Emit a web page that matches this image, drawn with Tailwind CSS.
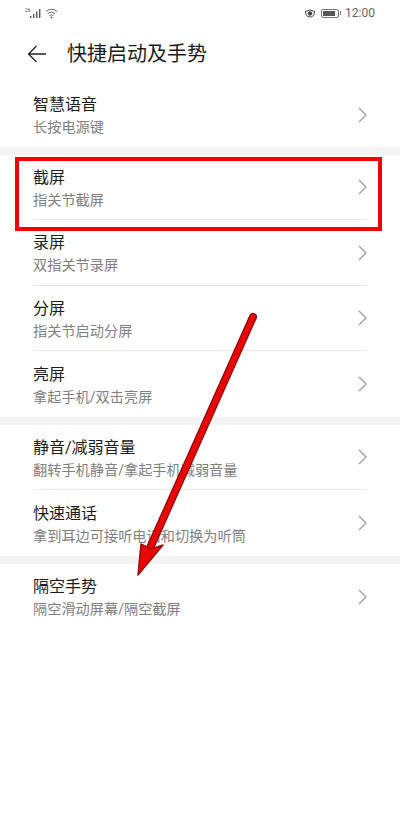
<!DOCTYPE html>
<html lang="zh-CN">
<head>
  <meta charset="UTF-8">
  <meta name="viewport" content="width=device-width, initial-scale=1.0">
  <title>快捷启动及手势</title>
  <script src="https://cdn.jsdelivr.net/npm/@tailwindcss/browser@4"></script>
</head>
<body class="relative w-[400px] h-[816px] overflow-hidden bg-white text-[#1c1c1c] font-['Roboto','Noto_Sans_CJK_SC',sans-serif]">

  <!-- status bar -->
  <div class="h-[26px] pl-[25px] pr-[25px] flex items-center justify-between text-[#666]">
    <div class="flex items-center gap-[3px]">
      <svg width="17" height="12" viewBox="0 0 17 12" fill="#555">
        <text x="0" y="4.5" font-size="5" font-family="Roboto">26</text>
        <rect x="5" y="9" width="1.4" height="2"/><rect x="8" y="7" width="1.4" height="4"/><rect x="11" y="4.500" width="1.4" height="6.500"/><rect x="14" y="2" width="1.400" height="9"/>
      </svg>
      <svg width="13" height="11" viewBox="0 0 13 11" fill="none" stroke="#666" stroke-width="1">
        <path d="M1 3.500Q6.500-1 12 3.500M2.800 5.500Q6.500 2.500 10.200 5.500M4.500 7.500Q6.500 6 8.500 7.500"/><circle cx="6.500" cy="9.500" r=".6" fill="#666"/>
      </svg>
    </div>
    <div class="flex items-center text-[12px]">
      <svg class="mr-[5px]" width="12" height="10" viewBox="0 0 12 10" fill="none" stroke="#444" stroke-width="1">
        <path d="M1 3.500Q6 .5 11 3.500M1.500 3Q1.500 9 6 9Q10.500 9 10.500 3"/><circle cx="6" cy="5.500" r="1.800" fill="#444"/>
      </svg>
      <div class="w-[18px] h-[9px] border border-[#777] rounded-[2px] p-px mr-px"><div class="w-[12px] h-full bg-[#555]"></div></div>
      <div class="w-px h-[4px] bg-[#777] mr-[4px]"></div>
      <span>12:00</span>
    </div>
  </div>

  <!-- title bar -->
  <div class="h-[56px] pl-[27px] flex items-center">
    <svg width="20" height="18" viewBox="0 0 20 18" fill="none" stroke="#222" stroke-width="1.300">
      <path d="M19 9H1.500M9.500 1L1.500 9l8 8"/>
    </svg>
    <span class="ml-[20px] text-[20px] leading-[28px]">快捷启动及手势</span>
  </div>

  <!-- group 1 -->
  <a class="h-[65px] pl-[33px] pr-[33px] flex items-center justify-between">
    <div class="pt-[2px]">
      <div class="text-[16px] leading-[22px]">智慧语音</div>
      <div class="text-[14.2px] leading-[22px] text-[#808080]">长按电源键</div>
    </div>
    <svg width="9" height="16" viewBox="0 0 9 16" fill="none" stroke="#999" stroke-width="1.200"><path d="M1 1l7 7-7 7"/></svg>
  </a>
  <div class="h-[8px] bg-[#f3f3f3]"></div>

  <!-- group 2 -->
  <div class="pl-[33px] pr-[33px]">
    <a class="h-[65px] flex items-center justify-between border-b border-[#e8e8e8]">
      <div class="pt-[4px]">
        <div class="text-[16px] leading-[22px]">截屏</div>
        <div class="text-[14.2px] leading-[22px] text-[#808080]">指关节截屏</div>
      </div>
      <svg width="9" height="16" viewBox="0 0 9 16" fill="none" stroke="#999" stroke-width="1.200"><path d="M1 1l7 7-7 7"/></svg>
    </a>
    <a class="h-[66px] flex items-center justify-between border-b border-[#e8e8e8]">
      <div class="pt-[3px]">
        <div class="text-[16px] leading-[22px]">录屏</div>
        <div class="text-[14.2px] leading-[22px] text-[#808080]">双指关节录屏</div>
      </div>
      <svg width="9" height="16" viewBox="0 0 9 16" fill="none" stroke="#999" stroke-width="1.200"><path d="M1 1l7 7-7 7"/></svg>
    </a>
    <a class="h-[65px] flex items-center justify-between border-b border-[#e8e8e8]">
      <div class="pt-[4px]">
        <div class="text-[16px] leading-[22px]">分屏</div>
        <div class="text-[14.2px] leading-[22px] text-[#808080]">指关节启动分屏</div>
      </div>
      <svg width="9" height="16" viewBox="0 0 9 16" fill="none" stroke="#999" stroke-width="1.200"><path d="M1 1l7 7-7 7"/></svg>
    </a>
    <a class="h-[66px] flex items-center justify-between">
      <div class="pt-[3px]">
        <div class="text-[16px] leading-[22px]">亮屏</div>
        <div class="text-[14.2px] leading-[22px] text-[#808080]">拿起手机/双击亮屏</div>
      </div>
      <svg width="9" height="16" viewBox="0 0 9 16" fill="none" stroke="#999" stroke-width="1.200"><path d="M1 1l7 7-7 7"/></svg>
    </a>
  </div>
  <div class="h-[8px] bg-[#f3f3f3]"></div>

  <!-- group 3 -->
  <div class="pl-[33px] pr-[33px]">
    <a class="h-[65px] flex items-center justify-between border-b border-[#e8e8e8]">
      <div class="pt-[4px]">
        <div class="text-[16px] leading-[22px]">静音/减弱音量</div>
        <div class="text-[14.2px] leading-[22px] text-[#808080]">翻转手机静音/拿起手机减弱音量</div>
      </div>
      <svg width="9" height="16" viewBox="0 0 9 16" fill="none" stroke="#999" stroke-width="1.200"><path d="M1 1l7 7-7 7"/></svg>
    </a>
    <a class="h-[66px] flex items-center justify-between">
      <div class="pt-[3px]">
        <div class="text-[16px] leading-[22px]">快速通话</div>
        <div class="text-[14.2px] leading-[22px] text-[#808080]">拿到耳边可接听电话和切换为听筒</div>
      </div>
      <svg width="9" height="16" viewBox="0 0 9 16" fill="none" stroke="#999" stroke-width="1.200"><path d="M1 1l7 7-7 7"/></svg>
    </a>
  </div>
  <div class="h-[8px] bg-[#f3f3f3]"></div>

  <!-- group 4 -->
  <a class="h-[65px] pl-[33px] pr-[33px] flex items-center justify-between">
    <div class="pt-[3px]">
      <div class="text-[16px] leading-[22px]">隔空手势</div>
      <div class="text-[14.2px] leading-[22px] text-[#808080]">隔空滑动屏幕/隔空截屏</div>
    </div>
    <svg width="9" height="16" viewBox="0 0 9 16" fill="none" stroke="#999" stroke-width="1.200"><path d="M1 1l7 7-7 7"/></svg>
  </a>

  <!-- red annotations drawn over the screenshot -->
  <div class="absolute left-[15px] top-[157px] w-[367px] h-[74px] border-[4px] border-[#f40009]"></div>
  <svg class="absolute left-0 top-0" width="400" height="816" viewBox="0 0 400 816" fill="none">
    <path d="M253 317L150 548" stroke="#8c0a0a" stroke-width="8" stroke-linecap="round"/>
    <path d="M253 317L150 548" stroke="#ea0606" stroke-width="5.500" stroke-linecap="round"/>
    <path d="M138 575L141 544L151 549L163 545Z" fill="#ea0606" stroke="#a00a0a" stroke-width="1.500" stroke-linejoin="round"/>
  </svg>
</body>
</html>
